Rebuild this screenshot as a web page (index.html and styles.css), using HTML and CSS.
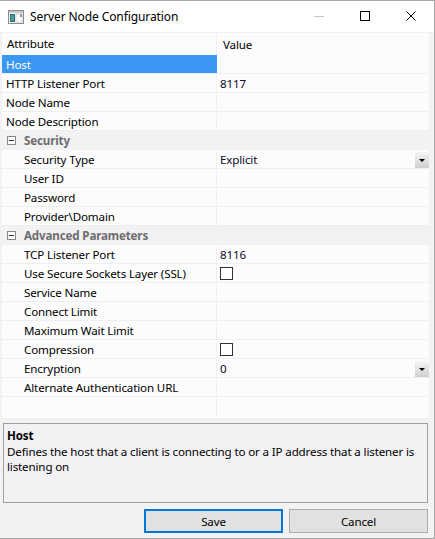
FILE: index.html
```html
<!DOCTYPE html>
<html>
<head>
<meta charset="utf-8">
<link rel="stylesheet" href="styles.css">
</head>
<body>
<div class="window">
  <div class="titlebar">
    <svg class="appicon" width="16" height="14" viewBox="0 0 16 14">
      <rect x="0.5" y="0.5" width="15" height="13" fill="#f4f4f4" stroke="#8c8c8c"/>
      <rect x="1" y="1" width="14" height="2" fill="#c8c8c8"/>
      <rect x="2" y="4" width="5" height="8" fill="#2f6f78"/>
      <rect x="3" y="5" width="3" height="6" fill="#4b9aa0"/>
      <rect x="8" y="4" width="6" height="8" fill="#ffffff" stroke="#b0b0b0" stroke-width="0.5"/>
      <rect x="12" y="4" width="2" height="3" fill="#9a9a9a"/>
    </svg>
    <span class="title">Server Node Configuration</span>
    <div class="controls">
      <span class="ctl min"><svg width="11" height="11" viewBox="0 0 11 11"><line x1="0" y1="5.5" x2="10" y2="5.5" stroke="#c4c4c4"/></svg></span>
      <span class="ctl max"><svg width="11" height="11" viewBox="0 0 11 11"><rect x="0.5" y="0.5" width="9" height="9" fill="none" stroke="#000"/></svg></span>
      <span class="ctl close"><svg width="11" height="11" viewBox="0 0 11 11"><path d="M0.5 0.5 L9.5 9.5 M9.5 0.5 L0.5 9.5" stroke="#000" stroke-width="1"/></svg></span>
    </div>
  </div>

  <div class="grid">
    <div class="row header"><div class="name">Attribute</div><div class="value">Value</div></div>
    <div class="row selected"><div class="name">Host</div><div class="value"></div></div>
    <div class="row"><div class="name">HTTP Listener Port</div><div class="value">8117</div></div>
    <div class="row"><div class="name">Node Name</div><div class="value"></div></div>
    <div class="row"><div class="name">Node Description</div><div class="value"></div></div>
    <div class="row category"><span class="toggle"></span><span class="catname">Security</span></div>
    <div class="row child"><div class="name">Security Type</div><div class="value"><span>Explicit</span><span class="drop"></span></div></div>
    <div class="row child"><div class="name">User ID</div><div class="value"></div></div>
    <div class="row child"><div class="name">Password</div><div class="value"></div></div>
    <div class="row child"><div class="name">Provider\Domain</div><div class="value"></div></div>
    <div class="row category"><span class="toggle"></span><span class="catname">Advanced Parameters</span></div>
    <div class="row child"><div class="name">TCP Listener Port</div><div class="value">8116</div></div>
    <div class="row child"><div class="name">Use Secure Sockets Layer (SSL)</div><div class="value"><span class="check"></span></div></div>
    <div class="row child"><div class="name">Service Name</div><div class="value"></div></div>
    <div class="row child"><div class="name">Connect Limit</div><div class="value"></div></div>
    <div class="row child"><div class="name">Maximum Wait Limit</div><div class="value"></div></div>
    <div class="row child"><div class="name">Compression</div><div class="value"><span class="check"></span></div></div>
    <div class="row child"><div class="name">Encryption</div><div class="value"><span>0</span><span class="drop"></span></div></div>
    <div class="row child"><div class="name">Alternate Authentication URL</div><div class="value"></div></div>
    <div class="row child last"><div class="name"></div><div class="value"></div></div>
  </div>

  <div class="desc">
    <div class="desc-title">Host</div>
    <div class="desc-text">Defines the host that a client is connecting to or a IP address that a listener is listening on</div>
  </div>

  <div class="buttons">
    <button class="btn primary">Save</button>
    <button class="btn">Cancel</button>
  </div>
</div>
</body>
</html>
```

FILE: styles.css
```css
html, body {
  margin: 0;
  padding: 0;
}
body {
  font-family: "Noto Sans", "Open Sans", sans-serif;
  font-size: 11.6px;
  letter-spacing: -0.15px;
  color: #000;
  background: #f2f1f4;
}
.window {
  width: 435px;
  height: 539px;
  box-sizing: border-box;
  border-top: 1px solid #a6a6a6;
  border-right: 1px solid #a6a6a6;
  border-bottom: 1px solid #a6a6a6;
  background: #f2f1f4;
  display: flex;
  flex-direction: column;
}
.titlebar {
  height: 31px;
  background: #ffffff;
  display: flex;
  align-items: center;
  padding-left: 8px;
  box-sizing: border-box;
  flex: none;
}
.appicon {
  flex: none;
  margin-top: 1px;
}
.title {
  margin-left: 6px;
  font-size: 12px;
  line-height: 16px;
  letter-spacing: -0.1px;
}
.controls {
  margin-left: auto;
  display: flex;
  height: 31px;
}
.ctl {
  width: 46px;
  display: flex;
  align-items: center;
  justify-content: center;
}
.ctl svg { display: block; }
.min { width: 45px; }
.grid {
  margin: 1px 5px 0 2px;
  height: 385px;
  background: #fcfcfc;
  flex: none;
  display: flex;
  flex-direction: column;
}
.row {
  display: flex;
  height: 19px;
  box-sizing: border-box;
  border-bottom: 1px solid #efeef1;
  padding-top: 1px;
  line-height: 17px;
  flex: none;
}
.row .name {
  width: 214px;
  flex: none;
  padding-left: 4px;
  box-sizing: border-box;
  white-space: nowrap;
  overflow: hidden;
}
.row .value {
  flex: 1;
  border-left: 1px solid #efeef1;
  padding-left: 3px;
  display: flex;
  align-items: center;
  justify-content: space-between;
  color: #0a0a2a;
}
.row.header {
  height: 22px;
  padding-top: 1px;
  line-height: 20px;
  border-bottom: none;
}
.row.header .name { padding-left: 5px; }
.row.header .value { padding-left: 6px; color: #000; }
.row.selected { padding-top: 0; }
.row.selected .name {
  background: #3a98f2;
  color: #ffffff;
  padding-top: 1px;
}
.row.selected .value { border-left-color: #3a98f2; }
.row.child .name { padding-left: 22px; }
.row.category {
  background: #f2f1f4;
  align-items: center;
  border-bottom-color: #f2f1f4;
}
.toggle {
  width: 9px;
  height: 9px;
  box-sizing: border-box;
  border: 1px solid #8a8a8a;
  margin-left: 5px;
  position: relative;
  background: #fdfdfd;
  flex: none;
}
.toggle::after {
  content: "";
  position: absolute;
  left: 1px;
  top: 3px;
  width: 5px;
  height: 1px;
  background: #333;
}
.catname {
  margin-left: 8px;
  font-weight: bold;
  color: #6d6d6d;
}
.drop {
  width: 14px;
  height: 16px;
  background: linear-gradient(#f6f6f6, #cfcfcf);
  position: relative;
  flex: none;
}
.drop::after {
  content: "";
  position: absolute;
  left: 4px;
  top: 7px;
  border-left: 3px solid transparent;
  border-right: 3px solid transparent;
  border-top: 3px solid #000;
}
.check {
  width: 13px;
  height: 13px;
  box-sizing: border-box;
  border: 1px solid #333;
  background: #fff;
  display: block;
}
.row.last { border-bottom: none; }
.desc {
  margin: 5px 6px 0 3px;
  height: 80px;
  box-sizing: border-box;
  border: 1px solid #a0a0a0;
  padding: 4px 3px;
  flex: none;
  line-height: 15px;
}
.desc-title {
  font-weight: bold;
}
.desc-text {
  margin-top: 1px;
}
.buttons {
  display: flex;
  justify-content: flex-end;
  gap: 6px;
  margin: 6px 6px 0 0;
  flex: none;
}
.btn {
  width: 139px;
  height: 24px;
  box-sizing: border-box;
  background: #e1e1e1;
  border: 1px solid #adadad;
  font-family: "Noto Sans", "Open Sans", sans-serif;
  font-size: 11.6px;
  letter-spacing: -0.15px;
  color: #000;
  padding: 0;
  margin: 0;
}
.btn.primary {
  border: 2px solid #0078d7;
}
```
